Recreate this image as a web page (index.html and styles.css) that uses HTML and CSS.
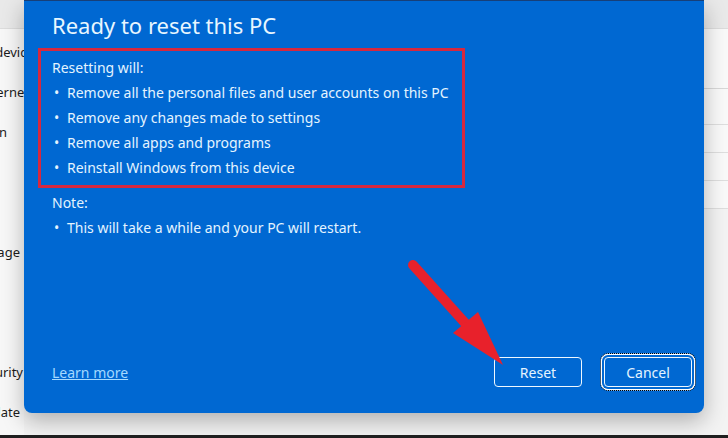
FILE: index.html
```html
<!DOCTYPE html>
<html lang="en">
<head>
    <meta charset="UTF-8">
    <title>Ready to reset this PC</title>
    <link rel="stylesheet" href="styles.css">
</head>
<body>
    <div class="window">
        <div class="titlebar"></div>
        <div class="settings">
            <div class="nav">
                <div class="nav-item"><span class="cut-a">Bluetooth &amp; devices</span></div>
                <div class="nav-item"><span class="cut-b">Network &amp; internet</span></div>
                <div class="nav-item"><span class="cut-c">Personalization</span></div>
                <div class="nav-item"></div>
                <div class="nav-item"></div>
                <div class="nav-item"><span class="cut-d">Time &amp; language</span></div>
                <div class="nav-item"></div>
                <div class="nav-item"></div>
                <div class="nav-item"><span class="cut-e">Privacy &amp; security</span></div>
                <div class="nav-item"><span class="cut-d">Windows Update</span></div>
            </div>
            <div class="main">
                <div class="card tall"></div>
                <div class="card"></div>
                <div class="card short"></div>
                <div class="card short"></div>
                <div class="card short"></div>
            </div>
        </div>
    </div>

    <!-- Reset dialog -->
    <div class="dialog">
        <h1 class="title">Ready to reset this PC</h1>

        <div class="highlight">
            <p class="label">Resetting will:</p>
            <ul class="bullets">
                <li>Remove all the personal files and user accounts on this PC</li>
                <li>Remove any changes made to settings</li>
                <li>Remove all apps and programs</li>
                <li>Reinstall Windows from this device</li>
            </ul>
        </div>

        <p class="label note">Note:</p>
        <ul class="bullets">
            <li>This will take a while and your PC will restart.</li>
        </ul>

        <div class="footer">
            <a class="learn" href="#">Learn more</a>
            <div class="actions">
                <button class="btn">Reset</button>
                <button class="btn btn-focus">Cancel</button>
            </div>
        </div>

        <!-- annotation arrow -->
        <svg class="arrow" width="120" height="120" viewBox="0 0 120 120">
            <line x1="10" y1="14" x2="62" y2="72" stroke="#e8212b" stroke-width="10" stroke-linecap="round"/>
            <polygon points="50,82 75,61 100,114" fill="#e8212b"/>
        </svg>
    </div>

    <div class="frame-bottom"></div>
</body>
</html>
```

FILE: styles.css
```css
html, body {
    margin: 0;
    height: 100%;
}
body {
    width: 728px;
    height: 438px;
    overflow: hidden;
    position: relative;
    font-family: "Noto Sans", "Open Sans", sans-serif;
    background: #f3f3f3;
}

/* Settings window behind the dialog */
.window {
    display: flex;
    flex-direction: column;
    height: 435px;
}
.titlebar {
    flex-shrink: 0;
    height: 28px;
    background: #e9e9e9;
    border-bottom: 1px solid #dcdcdc;
}
.settings {
    flex: 1;
    min-height: 0;
    overflow: hidden;
    display: flex;
}
.nav {
    width: 24px;
    padding-top: 13px;
    background: #f7f7f7;
}
.nav-item {
    height: 40px;
    display: flex;
    justify-content: flex-end;
    font-size: 13px;
    line-height: 20px;
    color: #1b1b1b;
    white-space: nowrap;
}
.nav-item span { flex-shrink: 0; }
.cut-a { margin-right: -16px; }
.cut-b { margin-right: -5px; }
.cut-c { margin-right: 17px; }
.cut-d { margin-right: 4px; }
.cut-e { margin-right: 1px; }

.main {
    flex: 1;
    padding-left: 680px;
    display: flex;
    flex-direction: column;
}
.card {
    flex-shrink: 0;
    height: 35px;
    background: #f9f9f9;
    border-bottom: 1px solid #dedede;
}
.card.tall { height: 59px; border-bottom-color: #d8d8d8; }
.card.short { height: 27px; }

.frame-bottom {
    position: absolute;
    left: 0;
    right: 0;
    bottom: 0;
    height: 3px;
    background: #1f1f1f;
}

/* Dialog */
.dialog {
    position: absolute;
    left: 24px;
    top: 0;
    width: 680px;
    height: 413px;
    box-sizing: border-box;
    padding: 0 12px 26px 28px;
    background: #0068d2;
    border-top: 1px solid #173f78;
    border-radius: 0 0 8px 8px;
    box-shadow: 0 8px 22px rgba(0, 0, 0, 0.28);
    color: #e4f4ff;
    display: flex;
    flex-direction: column;
}
.title {
    margin: 8px 0 0;
    font-size: 22px;
    font-weight: normal;
    line-height: 32px;
    color: #e8f6ff;
}
.highlight {
    width: 410px;
    margin: 7px 0 0 -14px;
    padding: 4px 0 5px 11px;
    border: 3px solid #d6283f;
}
.label {
    margin: 0;
    font-size: 14px;
    line-height: 25px;
}
.note { margin-top: 2px; }
.bullets {
    list-style: none;
    margin: 0;
    padding: 0;
}
.bullets li {
    display: flex;
    font-size: 14px;
    line-height: 25px;
}
.bullets li::before {
    content: "•";
    width: 15px;
    padding-left: 2px;
    box-sizing: border-box;
}

.footer {
    margin-top: auto;
    display: flex;
    align-items: center;
    justify-content: space-between;
}
.learn {
    color: #a4d9ff;
    font-size: 14px;
}
.actions {
    display: flex;
    gap: 22px;
}
.btn {
    width: 88px;
    height: 30px;
    background: #0068d2;
    border: 1.5px solid #eef8ff;
    border-radius: 4px;
    color: #e4f4ff;
    font-family: inherit;
    font-size: 14px;
}
.btn-focus {
    box-shadow: 0 0 0 2px #0068d2, 0 0 0 3.5px #ffffff;
    outline: 1px dotted #000;
    outline-offset: 3px;
}

.arrow {
    position: absolute;
    left: 379px;
    top: 250px;
}
```
